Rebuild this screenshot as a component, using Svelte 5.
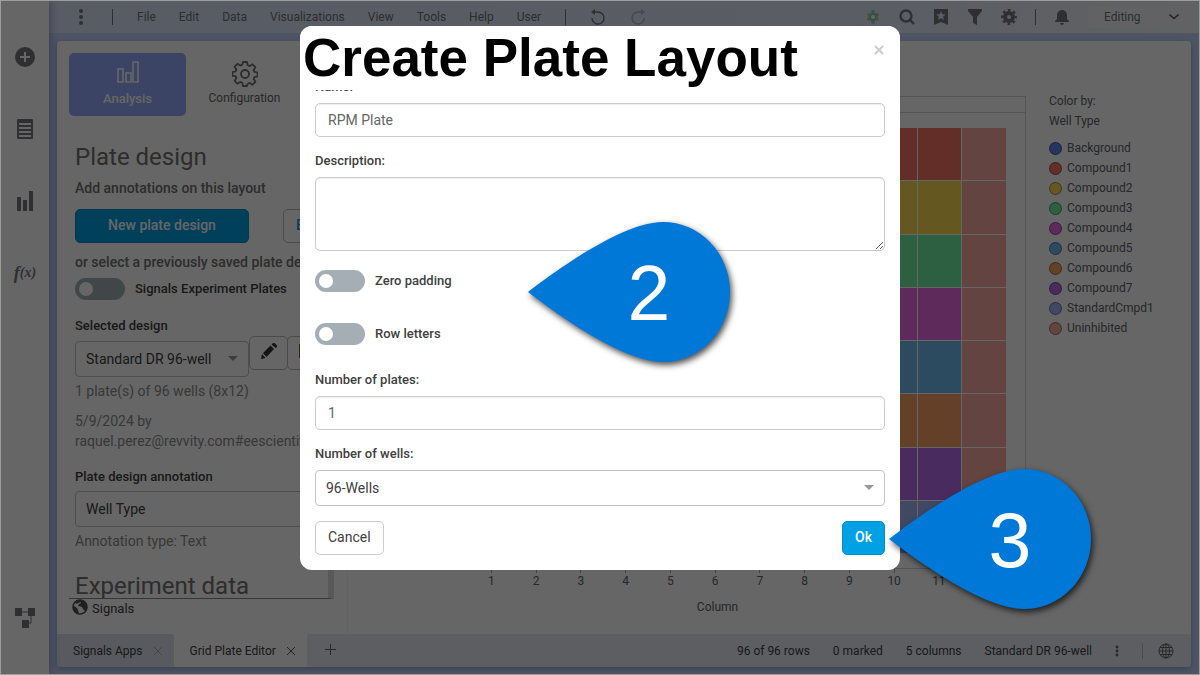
<script>
	const menus = ['File', 'Edit', 'Data', 'Visualizations', 'View', 'Tools', 'Help', 'User'];

	const legend = [
		{ name: 'Background', color: '#6482f0' },
		{ name: 'Compound1', color: '#fa7364' },
		{ name: 'Compound2', color: '#fad950' },
		{ name: 'Compound3', color: '#6ef0a3' },
		{ name: 'Compound4', color: '#ea6ae4' },
		{ name: 'Compound5', color: '#6ebcf2' },
		{ name: 'Compound6', color: '#faa064' },
		{ name: 'Compound7', color: '#b96cf0' },
		{ name: 'StandardCmpd1', color: '#a0b4fa' },
		{ name: 'Uninhibited', color: '#faaaa0' }
	];

	const columns = Array.from({ length: 12 }, (_, i) => i + 1);
	const rows = legend.slice(1, 9);

	let name = $state('RPM Plate');
	let description = $state('');
	let zeroPadding = $state(false);
	let rowLetters = $state(false);
	let plates = $state('1');
	let open = $state(true);

	// first column is background, last one is uninhibited
	function wellColor(row, column) {
		if (column === 1) return legend[0].color;
		if (column === 12) return legend[9].color;
		return row.color;
	}
</script>

<svelte:head>
	<title>Grid Plate Editor</title>
</svelte:head>

{#snippet caret()}
	<svg class="caret" width="10" height="5" viewBox="0 0 10 5"><path d="M0 0h10L5 5z" fill="#999" /></svg>
{/snippet}

<div class="window">
	<nav class="rail">
		<button aria-label="Add">
			<svg width="20" height="20" viewBox="0 0 20 20"><circle cx="10" cy="10" r="10" fill="#75777d" /><path d="M10 5v10M5 10h10" stroke="#fff" stroke-width="2" /></svg>
		</button>
		<button aria-label="Data table">
			<svg width="16" height="20" viewBox="0 0 16 20"><rect width="16" height="20" rx="1" fill="#75777d" /><path d="M2 5h12M2 9h12M2 13h12M2 17h12" stroke="#fff" stroke-width="2" /></svg>
		</button>
		<button aria-label="Visualizations">
			<svg width="16" height="20" viewBox="0 0 16 20" fill="#75777d"><path d="M0 6h4v14H0zM6 9h4v11H6zM12 0h4v20h-4z" /></svg>
		</button>
		<button class="fx" aria-label="Functions">f<small>(x)</small></button>
		<button class="last" aria-label="Data canvas">
			<svg width="20" height="20" viewBox="0 0 20 20"><path d="M5 4h10M16 6v9h-4" fill="none" stroke="#75777d" /><path d="M0 0h7v8H0zM13 0h7v8h-7zM7 12h7v8H7z" fill="#75777d" /></svg>
		</button>
	</nav>

	<div class="main">
		<header class="topbar">
			<button class="icon" aria-label="More">
				<svg width="6" height="18" viewBox="0 0 6 18" fill="#75777d"><circle cx="3" cy="3" r="2" /><circle cx="3" cy="9" r="2" /><circle cx="3" cy="15" r="2" /></svg>
			</button>
			<span class="sep"></span>
			<div class="menus">
				{#each menus as menu}
					<button>{menu}</button>
				{/each}
			</div>
			<span class="sep"></span>
			<button class="icon undo" aria-label="Undo">
				<svg width="16" height="16" viewBox="0 0 16 16"><path d="M3 3h5a6 6 0 1 1-6 6" fill="none" stroke="#75777d" stroke-width="1.5" /><path d="M5 0v6L1 3z" fill="#75777d" /></svg>
			</button>
			<button class="icon undo" aria-label="Redo">
				<svg width="16" height="16" viewBox="0 0 16 16"><path d="M13 3H8a6 6 0 1 0 6 6" fill="none" stroke="#aeb3bd" stroke-width="1.5" /><path d="M11 0v6l4-3z" fill="#aeb3bd" /></svg>
			</button>
			<div class="tools">
				<button class="icon" aria-label="Recommendations">
					<svg width="16" height="16" viewBox="0 0 16 16"><ellipse cx="8" cy="8" rx="2.500" ry="6.500" fill="#9cd06e" transform="rotate(62 8 8)" /><ellipse cx="8" cy="8" rx="2.500" ry="6.500" fill="#a9cf9c" transform="rotate(-62 8 8)" /><ellipse cx="8" cy="8" rx="2.500" ry="7.500" fill="#8fc5e4" /><circle cx="8" cy="8" r="3" fill="#7fbf95" /><circle cx="8" cy="8" r="2" fill="#fff" /></svg>
				</button>
				<button class="icon" aria-label="Search">
					<svg width="16" height="16" viewBox="0 0 16 16" fill="none" stroke="#75777d" stroke-width="2.4"><circle cx="7" cy="7" r="5.5" /><path d="m11 11 4 4" /></svg>
				</button>
				<button class="icon" aria-label="Bookmarks">
					<svg width="14" height="16" viewBox="0 0 14 16"><path d="M0 0h14v16l-7-3-7 3z" fill="#75777d" /><path d="m7 2 1.3 3.2 3.5.2-2.7 2.2.9 3.4-3-1.9-3 1.9.9-3.4-2.7-2.2 3.5-.2z" fill="#e0eaff" /></svg>
				</button>
				<button class="icon" aria-label="Filters">
					<svg width="14" height="16" viewBox="0 0 14 16"><path d="M0 0h14v2L9 8v8l-4-2V8L0 2z" fill="#75777d" /></svg>
				</button>
				<button class="icon" aria-label="Settings">
					<svg width="16" height="16" viewBox="0 0 16 16"><circle cx="8" cy="8" r="4" fill="none" stroke="#75777d" stroke-width="4" /><circle cx="8" cy="8" r="6.8" fill="none" stroke="#75777d" stroke-width="2.4" stroke-dasharray="2.67 2.67" stroke-dashoffset="1.3" /></svg>
				</button>
				<span class="sep"></span>
				<button class="icon" aria-label="Notifications">
					<svg width="14" height="16" viewBox="0 0 14 16"><path d="M0 13v-1l2-2V6a5 5 0 0 1 10 0v4l2 2v1zM5 14h4a2 2 0 0 1-4 0z" fill="#75777d" /></svg>
				</button>
				<button class="mode">Editing <svg width="10" height="6" viewBox="0 0 10 6"><path d="m.5.5 4.5 4 4.5-4" fill="none" stroke="#606267" stroke-width="1.6" /></svg></button>
			</div>
		</header>

		<div class="page">
			<div class="content">
				<aside class="panel">
					<div class="tabs">
						<button class="tab active">
							<svg width="22" height="22" viewBox="0 0 22 22" fill="none" stroke="#fff" stroke-width="1.6"><path d="M1 8h5v13H1zM9 12h5v9H9zM16 1h5v20h-5z" /></svg>
							Analysis
						</button>
						<button class="tab">
							<svg width="26" height="26" viewBox="0 0 26 26" fill="none" stroke="#707070" stroke-width="1.8"><circle cx="13" cy="13" r="4" /><path d="M11 1h4l.7 3.2 2 .9L20.500 3.300l2.900 2.900-1.800 2.700.8 2 3.200.7v3.800l-3.200.7-.8 2 1.800 2.700-2.900 2.900-2.800-1.800-2 .9L15 25h-4l-.7-3.200-2-.9-2.800 1.800-2.900-2.900 1.800-2.700-.8-2L.5 14.900v-3.800l3.100-.7.8-2-1.800-2.700 2.900-2.900 2.800 1.800 2-.9z" stroke-linejoin="round" /></svg>
							Configuration
						</button>
					</div>

					<div class="scroll">
						<h2>Plate design</h2>
						<p class="lead">Add annotations on this layout</p>
						<div class="actions">
							<button class="primary">New plate design</button>
							<button class="outline">Edit</button>
						</div>
						<p class="lead saved">or select a previously saved plate design</p>
						<label class="switch"><input type="checkbox" />Signals Experiment Plates</label>
						<label class="field-label" for="design">Selected design</label>
						<div class="design">
							<div class="select">
								<select id="design"><option>Standard DR 96-well</option></select>
								{@render caret()}
							</div>
							<button aria-label="Edit design">
								<svg width="16" height="16" viewBox="0 0 16 16" fill="#333"><path d="m0 16 1-5 3.500 4zM2 10l7.500-7.500 3.500 3.500L5.500 14zM10.500 1.500 12 0h1.500L16 2.500V4l-1.500 1z" /></svg>
							</button>
							<button aria-label="Copy design">
								<svg width="14" height="14" viewBox="0 0 14 14" fill="#8a6420"><path d="M0 0h9l5 5v9H0z" /></svg>
							</button>
						</div>
						<p class="muted">1 plate(s) of 96 wells (8x12)</p>
						<p class="muted author">5/9/2024 by<br />raquel.perez@revvity.com#eescientific</p>
						<label class="field-label" for="annotation">Plate design annotation</label>
						<div class="select annotation">
							<select id="annotation"><option>Well Type</option></select>
						</div>
						<p class="muted">Annotation type: Text</p>
						<h2 class="next">Experiment data</h2>
					</div>
					<footer class="source">
						<svg width="16" height="16" viewBox="0 0 16 16"><circle cx="8" cy="8" r="7" fill="#fff" stroke="#505258" stroke-width="1.6" /><path d="M1 6l4 3 1 2 1 4-4-2-2-4zM5 1l5-0 4 3 1 5-2 3-2-2-1-2-4-1 1-2 2-1V3L6 4 5 5 3 4z" fill="#505258" /></svg>
						Signals
					</footer>
				</aside>

				<section class="viz">
					<div class="chart">
						<div class="trellis"></div>
						<div class="plot">
							<div class="wells">
								{#each rows as row}
									{#each columns as column}
										<span style:background={wellColor(row, column)}></span>
									{/each}
								{/each}
							</div>
						</div>
						<div class="axis">
							{#each columns as column}
								<span>{column}</span>
							{/each}
						</div>
						<p class="axis-title">Column</p>
					</div>
					<div class="legend">
						<p>Color by:</p>
						<p>Well Type</p>
						<ul>
							{#each legend as item}
								<li><i style:background={item.color}></i>{item.name}</li>
							{/each}
						</ul>
					</div>
				</section>
			</div>

			<div class="status">
				<button class="sheet">Signals Apps <svg width="8" height="8" viewBox="0 0 8 8"><path d="m0 0 8 8M8 0 0 8" stroke="#aaa" /></svg></button>
				<button class="sheet current">Grid Plate Editor <svg width="8" height="8" viewBox="0 0 8 8"><path d="m0 0 8 8M8 0 0 8" stroke="#555" /></svg></button>
				<button class="plus" aria-label="New page">
					<svg width="11" height="11" viewBox="0 0 11 11"><path d="M5.500 0v11M0 5.500h11" stroke="#666" /></svg>
				</button>
				<div class="counts">
					<span>96 of 96 rows</span>
					<span>0 marked</span>
					<span>5 columns</span>
					<span>Standard DR 96-well</span>
					<svg width="4" height="12" viewBox="0 0 4 12" fill="#666"><circle cx="2" cy="2" r="1.4" /><circle cx="2" cy="6" r="1.4" /><circle cx="2" cy="10" r="1.4" /></svg>
					<span class="rule"></span>
					<svg class="globe" width="16" height="16" viewBox="0 0 16 16" fill="none" stroke="#666"><circle cx="8" cy="8" r="7" /><ellipse cx="8" cy="8" rx="3.500" ry="7" /><path d="M8 1v14M1 8h14M2 4.500h12M2 11.500h12" /></svg>
				</div>
			</div>
		</div>
	</div>

	{#if open}
		<div class="overlay">
			<form class="dialog" onsubmit={(e) => e.preventDefault()}>
				<div class="dialog-head">
					<h1>Create Plate Layout</h1>
					<button type="button" class="close" aria-label="Close" onclick={() => (open = false)}>
						<svg width="10" height="10" viewBox="0 0 10 10"><path d="m1 1 8 8M9 1 1 9" stroke="#ccc" stroke-width="2" /></svg>
					</button>
				</div>
				<div class="dialog-body">
					<label class="field-label name" for="name">Name:</label>
					<input class="text" id="name" bind:value={name} />
					<label class="field-label" for="description">Description:</label>
					<textarea id="description" bind:value={description}></textarea>
					<label class="switch"><input type="checkbox" bind:checked={zeroPadding} />Zero padding</label>
					<label class="switch"><input type="checkbox" bind:checked={rowLetters} />Row letters</label>
					<label class="field-label plates" for="plates">Number of plates:</label>
					<input class="text" id="plates" inputmode="numeric" bind:value={plates} />
					<label class="field-label" for="wells">Number of wells:</label>
					<div class="select">
						<select id="wells"><option>96-Wells</option></select>
						{@render caret()}
					</div>
					<div class="buttons">
						<button type="button" class="cancel" onclick={() => (open = false)}>Cancel</button>
						<button class="primary">Ok</button>
					</div>
				</div>

				{#each ['2', '3'] as step}
					<svg class="marker step-{step}" width="202" height="140" viewBox="0 0 202 140">
						<path d="M0 70C30 47 95 0 135 0a67 70 0 0 1 0 140C95 140 30 93 0 70z" fill="#0078d8" />
						<text x="121" y="98" text-anchor="middle">{step}</text>
					</svg>
				{/each}
			</form>
		</div>
	{/if}
</div>

<style>
	:global(body) {
		margin: 0;
		font-family: Roboto, "Liberation Sans", sans-serif;
	}

	.window, .window * {
		box-sizing: border-box;
	}

	.window {
		position: relative;
		display: flex;
		height: 100vh;
		min-height: 600px;
		border: 1px solid #9c9e9c;
		background: #c5d3fa;
		font-size: 14px;
		line-height: 20px;
		color: #404040;
		overflow: hidden;
	}

	h1, h2, p, ul {
		margin: 0;
		padding: 0;
		list-style: none;
	}

	button, input, select, textarea {
		font: inherit;
		color: inherit;
		margin: 0;
	}

	button {
		padding: 0;
		border: 0;
		background: none;
	}

	svg {
		flex: none;
	}

	/* left rail */
	.rail {
		display: flex;
		flex-direction: column;
		width: 48px;
		padding: 20px 0;
		background: #fff;
		box-shadow: 0 0 10px #7d8cbc;
		z-index: 1;
	}

	.rail button {
		display: flex;
		align-items: center;
		justify-content: center;
		height: 72px;
	}

	.rail .last {
		margin-top: auto;
	}

	.rail .fx {
		color: #75777d;
		font: italic bold 18px "Liberation Serif", serif;
	}

	.fx small {
		font-size: 14px;
	}

	/* top bar */
	.main {
		display: flex;
		flex-direction: column;
		flex: 1;
		min-width: 0;
	}

	.topbar {
		display: flex;
		align-items: center;
		height: 32px;
		padding-right: 9px;
		background: linear-gradient(90deg, #dce6fc, #e0e8fa 70%, #f2f5fa);
		font-size: 12px;
		color: #707278;
	}

	.icon {
		display: flex;
		justify-content: center;
		width: 16px;
	}

	.topbar > .icon:first-child {
		margin: 0 23px 0 24px;
	}

	.sep {
		width: 1px;
		height: 16px;
		background: #75777d;
	}

	.menus {
		display: flex;
		gap: 23px;
		margin: 0 24px;
	}

	.undo {
		margin-left: 24px;
	}

	.tools {
		display: flex;
		align-items: center;
		gap: 18px;
		margin-left: auto;
	}

	.mode {
		display: flex;
		align-items: center;
		justify-content: space-between;
		width: 102px;
		height: 22px;
		padding: 0 11px 0 16px;
		border-radius: 4px;
		background: #f4f6fc;
	}

	/* document */
	.page {
		display: flex;
		flex-direction: column;
		flex: 1;
		min-height: 0;
		margin: 8px 8px 7px;
		border-radius: 4px;
		background: #fff;
		box-shadow: 0 2px 6px #8f9dc8;
		overflow: hidden;
	}

	.content {
		display: flex;
		flex: 1;
		min-height: 0;
	}

	.panel {
		display: flex;
		flex-direction: column;
		width: 291px;
		padding: 12px 13px 0 12px;
		border-right: 1px solid #f4f4f4;
	}

	.tabs {
		display: flex;
	}

	.tab {
		display: flex;
		flex-direction: column;
		align-items: center;
		justify-content: center;
		gap: 1px;
		width: 117px;
		height: 63px;
		border-radius: 5px;
		font-size: 12px;
		color: #666;
	}

	.tab.active {
		gap: 6px;
		background: #94aafa;
		font-size: 13px;
		font-weight: 500;
		color: #fff;
	}

	.scroll {
		flex: 1;
		min-height: 0;
		padding: 28px 0 0 6px;
		border-right: 6px solid #ddd;
		border-bottom: 1px solid #888;
		overflow: hidden;
		white-space: nowrap;
	}

	h2 {
		font-size: 24px;
		font-weight: 400;
		line-height: 26px;
		color: #707070;
	}

	h2.next {
		margin-top: 22px;
	}

	.lead {
		margin-top: 8px;
		font-weight: 500;
		color: #707070;
	}

	.actions {
		display: flex;
		gap: 34px;
		margin-top: 11px;
	}

	.primary {
		flex: none;
		height: 34px;
		padding: 0 12px 2px;
		border: 1px solid #0090cc;
		border-radius: 5px;
		background: #00a1e4;
		font-weight: 500;
		color: #fff;
	}

	.actions .primary {
		width: 174px;
	}

	.outline {
		height: 34px;
		padding: 0 12px 2px;
		border: 1px solid #bbb;
		border-radius: 5px;
		color: #00a1e4;
		font-weight: 500;
	}

	.saved {
		margin: 9px 0 6px;
	}

	.switch {
		display: flex;
		align-items: center;
		gap: 10px;
		height: 22px;
		font-size: 13px;
		font-weight: 500;
	}

	.switch input {
		appearance: none;
		width: 50px;
		height: 22px;
		padding: 4px;
		border-radius: 11px;
		background: #a4aeb4;
	}

	.switch input::before {
		content: "";
		display: block;
		width: 14px;
		height: 14px;
		border-radius: 50%;
		background: #fff;
	}

	.switch input:checked {
		padding-left: 32px;
		background: #00a1e4;
	}

	.field-label {
		display: block;
		margin: 16px 0 4px;
		font-size: 13px;
		font-weight: 500;
	}

	.select {
		position: relative;
	}

	select {
		appearance: none;
		display: block;
		width: 100%;
		height: 36px;
		padding: 0 28px 0 10px;
		border: 1px solid #c4c4c4;
		border-radius: 4px;
		background: #fff;
	}

	.caret {
		position: absolute;
		top: 15px;
		right: 11px;
		pointer-events: none;
	}

	.design {
		display: flex;
		align-items: flex-start;
	}

	.design .select {
		width: 174px;
		margin-top: 1px;
	}

	.design button {
		display: flex;
		align-items: center;
		flex: none;
		width: 39px;
		height: 34px;
		margin: -4px -1px 0 0;
		padding: 0 11px 4px;
		border: 1px solid #bbb;
		border-radius: 5px;
	}

	.muted {
		margin-top: 4px;
		color: #8c8c8c;
	}

	.author {
		margin-top: 10px;
	}

	.source {
		display: flex;
		align-items: flex-start;
		gap: 4px;
		height: 35px;
		padding-left: 3px;
		font-size: 13px;
	}

	/* chart */
	.viz {
		display: flex;
		flex: 1;
		gap: 23px;
		min-width: 0;
		padding: 55px 0 17px 61px;
		font-size: 12px;
		color: #606268;
	}

	.chart {
		display: flex;
		flex-direction: column;
		flex: 1;
	}

	.trellis {
		height: 17px;
		margin-left: 41px;
		border: 1px solid #d4d4d4;
	}

	.plot {
		display: flex;
		flex: 1;
		margin-left: 41px;
		padding: 15px 19px;
		border: solid #d4d4d4;
		border-width: 0 1px 1px;
	}

	.wells {
		display: grid;
		grid-template-columns: repeat(12, 1fr);
		gap: 1px;
		flex: 1;
	}

	.axis {
		display: grid;
		grid-template-columns: repeat(12, 1fr);
		margin: 0 20px 0 60px;
		text-align: center;
	}

	.axis span::before {
		content: "";
		display: block;
		width: 1px;
		height: 4px;
		margin: 0 auto -2px;
		background: #aaa;
	}

	.axis-title {
		margin-top: 6px;
		text-align: center;
	}

	.legend {
		width: 142px;
		margin-top: -5px;
	}

	.legend ul {
		margin-top: 7px;
	}

	.legend li {
		display: flex;
		align-items: center;
		gap: 5px;
	}

	.legend i {
		width: 13px;
		height: 13px;
		border: 1px solid #0005;
		border-radius: 50%;
	}

	/* status bar */
	.status {
		display: flex;
		height: 33px;
		background: #e9ecf6;
		font-size: 12px;
	}

	.sheet {
		display: flex;
		align-items: center;
		gap: 11px;
		padding: 0 12px 0 16px;
		background: #dce0ee;
	}

	.sheet.current {
		background: #fff;
	}

	.plus {
		width: 48px;
	}

	.counts {
		display: flex;
		align-items: center;
		gap: 23px;
		margin-left: auto;
		padding-right: 17px;
	}

	.counts .globe {
		margin-left: -8px;
	}

	.rule {
		width: 1px;
		height: 16px;
		background: #bbb;
	}

	/* dialog */
	.overlay {
		position: absolute;
		inset: 0;
		z-index: 2;
		display: flex;
		align-items: flex-start;
		justify-content: center;
		padding-top: 25px;
		background: rgba(0, 0, 0, 0.6);
	}

	.dialog {
		position: relative;
		width: 600px;
		border-radius: 12px;
		background: #fff;
	}

	.dialog-head {
		position: relative;
		display: flex;
		justify-content: space-between;
		height: 64px;
		padding: 0 16px 0 3px;
		border-radius: 12px 12px 0 0;
		background: #fff;
		z-index: 1;
	}

	h1 {
		font: bold 53px/64px "Liberation Sans", Arial, sans-serif;
		color: #000;
	}

	.close {
		display: flex;
		height: 10px;
		margin-top: 19px;
	}

	.dialog-body {
		padding: 0 15px 15px;
	}

	.dialog-body .field-label {
		margin: 14px 0 6px;
	}

	.dialog-body .name {
		margin-top: -13px;
	}

	.dialog-body .plates {
		margin-top: 25px;
	}

	.dialog-body .switch + .switch {
		margin-top: 31px;
	}

	.text, textarea {
		display: block;
		width: 100%;
		height: 34px;
		padding: 6px 12px;
		border: 1px solid #ccc;
		border-radius: 5px;
		box-shadow: inset 0 1px 1px #0001;
		color: #666;
	}

	textarea {
		height: 74px;
		margin-bottom: 19px;
		resize: vertical;
	}

	.buttons {
		display: flex;
		justify-content: space-between;
		margin-top: 15px;
	}

	.cancel {
		height: 34px;
		padding: 0 12px 2px;
		border: 1px solid #ccc;
		border-radius: 5px;
	}

	/* numbered callouts over the dialog */
	.marker {
		position: absolute;
		overflow: visible;
		filter: drop-shadow(2px 3px 3px rgba(0, 0, 0, 0.7));
		pointer-events: none;
	}

	.marker text {
		font: 77px "Liberation Sans", Arial, sans-serif;
		fill: #fff;
	}

	.step-2 {
		top: 196px;
		left: 228px;
	}

	.step-3 {
		top: 443px;
		left: 589px;
	}
</style>
